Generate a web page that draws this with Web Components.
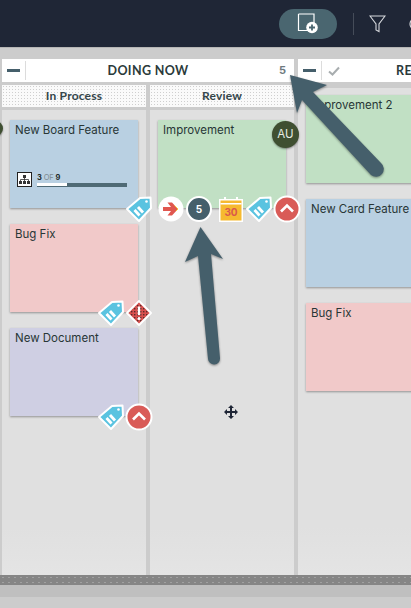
<!DOCTYPE html>
<html><head><meta charset="utf-8"><title>Board</title>
<style>
html,body{margin:0;padding:0;height:100%;overflow:hidden;background:#ccc}
body{font-family:"Inter","Liberation Sans",sans-serif;color:#2b3a3a}
</style></head>
<body>
<template id="t-tag"><style>:host{display:block;width:28px;height:28px}svg{display:block}</style>
<svg width="28" height="28" viewBox="0 0 28 28"><path d="M2 14 15 3 25.500 2.500 26 13 14 26Z" fill="#5ac3e0" stroke="#fff" stroke-width="2" stroke-linejoin="round"/><circle cx="21.500" cy="6.500" r="1.300" fill="#fff"/><path d="M9.500 15 14.500 20.500M13 12 18 17.500" stroke="#fff" stroke-width="2.800" fill="none"/></svg></template>
<template id="t-caret"><style>:host{display:block;width:28px;height:28px}svg{display:block}</style>
<svg width="28" height="28" viewBox="0 0 28 28"><circle cx="14" cy="14" r="12.500" fill="#d95b57" stroke="#fff" stroke-width="2"/><path d="M8 16.500 14 10.500 20 16.500" fill="none" stroke="#fff" stroke-width="2.600"/></svg></template>
<template id="t-alert"><style>:host{display:block;width:28px;height:28px}svg{display:block}</style>
<svg width="28" height="28" viewBox="0 0 28 28"><defs><pattern id="d" width="3" height="3" patternUnits="userSpaceOnUse"><rect width="3" height="3" fill="#d8504e"/><rect width="1.400" height="1.400" fill="#5c2a2a"/></pattern></defs><path d="M14 2 26 14 14 26 2 14Z" fill="url(#d)" stroke="#fff" stroke-width="2" stroke-linejoin="round"/><path d="M14 7.500V16" stroke="#fff" stroke-width="2.400"/><circle cx="14" cy="19.500" r="1.500" fill="#fff"/></svg></template>
<template id="t-next"><style>:host{display:block;width:28px;height:28px}svg{display:block}</style>
<svg width="28" height="28" viewBox="0 0 28 28"><circle cx="14" cy="14" r="12.500" fill="#fff"/><path d="M6 12H14L10.500 7.500H15L21 14 15 20.500H10.500L14 16H6Z" fill="#e0574f"/><path d="M17.500 10.500 21 14 19 16" fill="none" stroke="#f3c53c" stroke-width="1"/></svg></template>
<template id="t-count"><style>:host{display:block;width:28px;height:28px;position:relative}
b{position:absolute;inset:1px;border-radius:50%;box-sizing:border-box;border:2px solid #fff;background:#455f6b;color:#fff;font:700 10px/22px "Inter","Liberation Sans",sans-serif;text-align:center}</style><b><slot></slot></b></template>
<template id="t-cal"><style>:host{display:block;width:28px;height:28px;position:relative}
svg{display:block}span{position:absolute;left:3px;right:3px;top:10px;text-align:center;font:700 10px/14px "Inter","Liberation Sans",sans-serif;color:#d9594c}</style>
<svg width="28" height="28" viewBox="0 0 28 28"><rect x="2" y="4" width="24" height="23" fill="#fff"/><rect x="3.500" y="5.500" width="21" height="20" fill="#f6ba30"/><rect x="3.500" y="8" width="21" height="1.500" fill="#fff"/><path d="M8 2V5M20 2V5" stroke="#fff" stroke-width="2"/></svg><span><slot></slot></span></template>

<template id="t-topbar"><style>
:host{display:flex;align-items:center;height:47px;background:#1f2636;border-bottom:1px solid #b5b5b5;box-sizing:content-box;padding-left:279px;overflow:hidden}
.pill{width:58px;height:30px;border-radius:15px;background:#4a6670;display:flex;align-items:center;justify-content:center;flex:none}
.div{width:1px;height:22px;background:#454c59;margin:0 15px 0 16px;flex:none}
svg{display:block;flex:none}
.srch{margin-left:22px}
</style>
<div class="pill"><svg width="22" height="22" viewBox="0 0 22 22"><path d="M1.500 1H17V10M11 17.500H1.500V1" fill="none" stroke="#fff" stroke-width="1.200"/><circle cx="15" cy="14.500" r="5.800" fill="#fff"/><path d="M15 11.500V17.500M12 14.500H18" stroke="#4a6670" stroke-width="1.800"/></svg></div>
<div class="div"></div>
<svg width="17" height="19" viewBox="0 0 17 19"><path d="M1 2H16L10 10V17.500L7 16V10Z" fill="none" stroke="#d5d8dc" stroke-width="1.100"/></svg>
<svg class="srch" width="12" height="16" viewBox="0 0 12 16"><circle cx="8" cy="8" r="6" fill="none" stroke="#d5d8dc" stroke-width="1.200"/></svg>
</template>

<template id="t-head"><style>
:host{display:flex;align-items:center;height:23px;background:#fff;position:relative;box-sizing:border-box}
.min{width:13px;height:3px;background:#455f6b;margin:0 5px 0 5px;flex:none}
.sep{width:1px;height:19px;background:#dcdcdc;flex:none}
.chk{margin-left:6px;flex:none;display:block}
.t{position:absolute;left:0;right:0;text-align:center;font:700 12.500px/23px "Lato","Liberation Sans",sans-serif;letter-spacing:.35px;color:#2b3a3a;white-space:nowrap}
.n{margin-left:auto;margin-right:8px;font:700 11px/23px "Inter","Liberation Sans",sans-serif;color:#6e7a7f;position:relative}
</style>
<div class="min"></div><div class="sep"></div><slot name="check"></slot>
<div class="t"><slot></slot></div><div class="n"><slot name="count"></slot></div></template>

<template id="t-lanehead"><style>
:host{display:block;height:22px;background-color:#fafafa;background-image:radial-gradient(#cfcfcf .6px,transparent .7px);background-size:3px 3px;text-align:center;font:700 12px/22px "Lato","Liberation Sans",sans-serif;letter-spacing:.2px;color:#34464a}
</style><slot></slot></template>

<template id="t-lane"><style>
:host{display:flex;flex-direction:column;flex:1 1 0;min-width:0;background-color:#e0e0e0;background-image:linear-gradient(to bottom,transparent 90%,#e4e4e4 100%);padding:10px 8px 0 8px;box-sizing:border-box;gap:16px}
</style><slot></slot></template>

<template id="t-card"><style>
:host{display:block;position:relative;height:88px;background:var(--c,#b9d0e2);box-shadow:0 1px 2px rgba(0,0,0,.35);padding:3px 5px;box-sizing:border-box;font:400 11.500px/15px "Inter","Liberation Sans",sans-serif;color:#283636;flex:none}
.ic{position:absolute;right:-15px;bottom:-15px;display:flex}
</style><slot></slot><div class="ic"><slot name="icons"></slot></div></template>

<template id="t-progress"><style>
:host{display:flex;position:absolute;left:7px;top:52px;gap:5px;align-items:flex-start;width:110px}
.box{width:15px;height:15px;box-sizing:border-box;border:1.200px solid #222;background:#fff;flex:none;display:flex;align-items:center;justify-content:center}
.r{flex:1;min-width:0;font:700 7.500px/9px "Inter","Liberation Sans",sans-serif;color:#1d2a2a;margin-top:1px}
i{font-style:normal;font-weight:400;color:#7b8a90}
.bar{height:4px;background:#4f6a75;margin-top:1px}
.bar div{width:30px;height:3px;background:#fff}
</style>
<div class="box"><svg width="11" height="10" viewBox="0 0 11 10"><path d="M4 0H7V3H4ZM0 6H3V9H0ZM4 6H7V9H4ZM8 6H11V9H8Z" fill="#333"/><path d="M5.500 3V6M1.500 6V4.500H9.500V6" stroke="#333" fill="none" stroke-width=".8"/></svg></div>
<div class="r">3 <i>OF</i> 9<div class="bar"><div></div></div></div></template>

<template id="t-avatar"><style>
:host{display:block;position:absolute;right:-13px;top:1px;width:27px;height:27px;border-radius:50%;background:#3f4f31;color:#e6ebe2;font:400 11.500px/27px "Inter","Liberation Sans",sans-serif;text-align:center;box-shadow:0 1px 2px rgba(0,0,0,.4)}
</style><slot></slot></template>

<template id="t-group"><style>
:host{display:flex;flex-direction:column;flex:none;height:100%;width:var(--w,292px);gap:3px}
.lanes{flex:1;display:flex;gap:4px;min-height:0}
::slotted([slot=heads]){}
.heads{display:flex;gap:4px}
.heads ::slotted(*){flex:1 1 0}
</style><slot name="head"></slot><div class="heads"><slot name="heads"></slot></div><div class="lanes"><slot></slot></div></template>

<template id="t-board"><style>
:host{display:flex;gap:4px;height:527px;padding:11px 0 0 2px;box-sizing:border-box;overflow:hidden;position:relative}
</style><slot></slot></template>

<template id="t-footer"><style>
:host{display:block;height:22px;background:#bfbfbf}
div{height:10px;background-color:#858585;background-image:radial-gradient(#a0a0a0 .6px,transparent .7px);background-size:6px 5px}
</style><div></div></template>

<template id="t-arrows"><style>
:host{display:block;position:absolute;left:0;top:0;width:411px;height:608px;pointer-events:none}
svg{display:block;filter:drop-shadow(0 1px 1px rgba(0,0,0,.4))}
</style>
<svg width="411" height="608" viewBox="0 0 411 608">
<path d="M290 75 327 85 313 92 381 163A7 7 0 0 1 371 175L302 100 297 113Z" fill="#455f6b"/>
<path d="M200.500 227 223 259 211 254 220 358A6 6 0 0 1 208 359L198 256 185 262Z" fill="#455f6b"/>
</svg></template>

<template id="t-cursor"><style>
:host{display:block;position:absolute;left:224px;top:405px;width:14px;height:14px}svg{display:block}
</style><svg width="14" height="14" viewBox="0 0 14 14"><path d="M7 0 10 3H8V6H11V4L14 7 11 10V8H8V11H10L7 14 4 11H6V8H3V10L0 7 3 4V6H6V3H4Z" fill="#1f2636"/></svg></template>

<kb-topbar></kb-topbar>
<kb-board>
  <kb-group>
    <kb-head slot="head">DOING NOW<span slot="count">5</span></kb-head>
    <kb-lanehead slot="heads">In Process</kb-lanehead>
    <kb-lanehead slot="heads">Review</kb-lanehead>
    <kb-lane>
      <kb-card style="--c:#b9d0e2">New Board Feature<kb-progress></kb-progress><div slot="icons"><kb-tag></kb-tag></div><kb-avatar style="right:auto;left:-22px;top:1px;width:15px;height:15px"></kb-avatar></kb-card>
      <kb-card style="--c:#f1c9c9">Bug Fix<div slot="icons" style="display:flex"><kb-tag></kb-tag><kb-alert></kb-alert></div></kb-card>
      <kb-card style="--c:#cfcfe3">New Document<div slot="icons" style="display:flex"><kb-tag></kb-tag><kb-caret></kb-caret></div></kb-card>
    </kb-lane>
    <kb-lane>
      <kb-card style="--c:#c1e0c4">Improvement<kb-avatar>AU</kb-avatar>
        <div slot="icons" style="display:flex;gap:0"><kb-next></kb-next><kb-count>5</kb-count><kb-cal style="margin-left:4px">30</kb-cal><kb-tag></kb-tag><kb-caret></kb-caret></div></kb-card>
    </kb-lane>
  </kb-group>
  <kb-group style="--w:292px">
    <kb-head slot="head"><svg slot="check" style="margin-left:6px;display:block" width="12" height="10" viewBox="0 0 12 10"><path d="M1 5.500 4.500 8.500 11 1.500" fill="none" stroke="#a8adaf" stroke-width="2"/></svg>READY TO SHIP</kb-head>
    <kb-lane style="margin-top:0;padding-top:7px">
      <kb-card style="--c:#c1e0c4">Improvement 2</kb-card>
      <kb-card style="--c:#b9d0e2">New Card Feature</kb-card>
      <kb-card style="--c:#f1c9c9">Bug Fix</kb-card>
    </kb-lane>
  </kb-group>
</kb-board>
<kb-footer></kb-footer>
<kb-arrows></kb-arrows>
<kb-cursor></kb-cursor>
<script>
const tags={'kb-tag':'t-tag','kb-caret':'t-caret','kb-alert':'t-alert','kb-next':'t-next','kb-count':'t-count','kb-cal':'t-cal','kb-topbar':'t-topbar','kb-head':'t-head','kb-lanehead':'t-lanehead','kb-lane':'t-lane','kb-card':'t-card','kb-progress':'t-progress','kb-avatar':'t-avatar','kb-group':'t-group','kb-board':'t-board','kb-footer':'t-footer','kb-arrows':'t-arrows','kb-cursor':'t-cursor'};
for(const [name,id] of Object.entries(tags)){
  customElements.define(name,class extends HTMLElement{
    constructor(){super();this.attachShadow({mode:'open'}).appendChild(document.getElementById(id).content.cloneNode(true));}
  });
}
</script>
</body></html>
